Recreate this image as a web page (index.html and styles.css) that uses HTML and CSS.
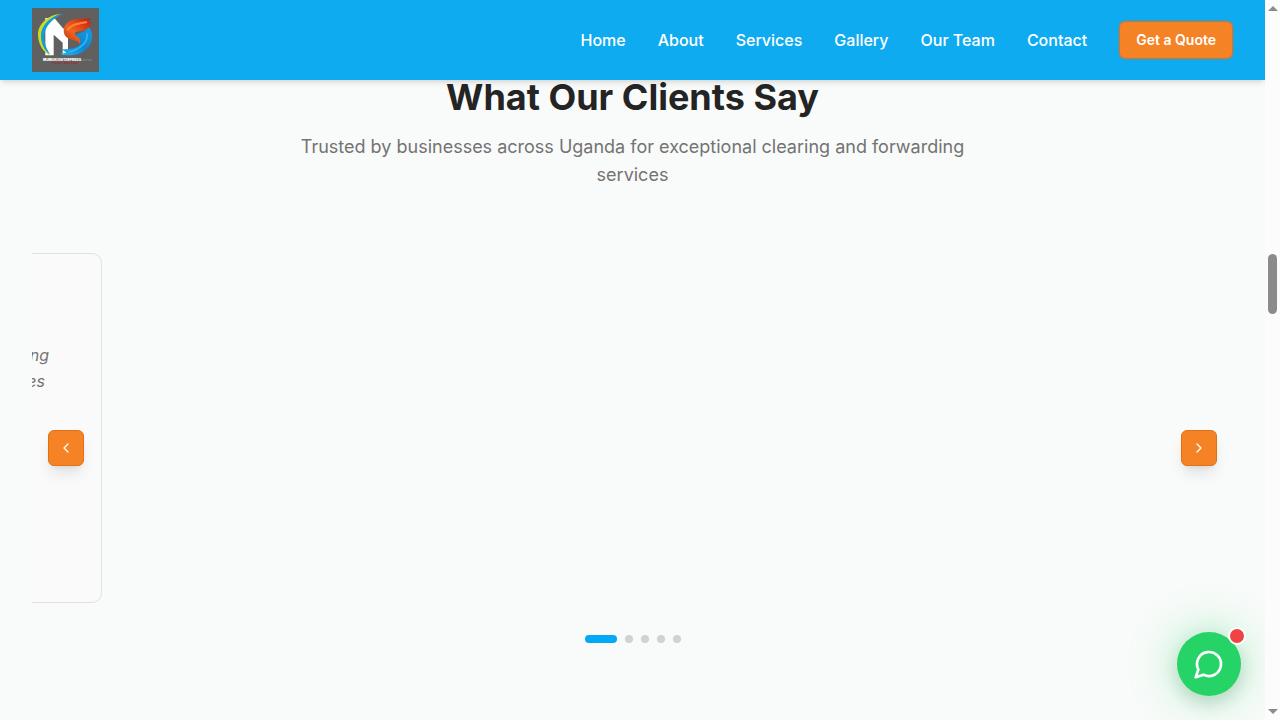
FILE: index.html
```html
<!DOCTYPE html>
<html lang="en">
<head>
<meta charset="utf-8">
<meta name="viewport" content="width=device-width, initial-scale=1">
<title>What Our Clients Say</title>
<link rel="stylesheet" href="styles.css">
</head>
<body>
<div class="page">
  <header class="header">
    <a class="logo" href="#" aria-label="Home page">
      <svg viewBox="0 0 201 192" width="67" height="64">
        <defs>
          <linearGradient id="fire" x1="0" y1="1" x2="1" y2="0"><stop offset="0" stop-color="#b83216"/><stop offset=".4" stop-color="#f0641c"/><stop offset="1" stop-color="#c9150f"/></linearGradient>
          <linearGradient id="water" x1="0" y1="1" x2="1" y2="0"><stop offset="0" stop-color="#28b4ee"/><stop offset=".5" stop-color="#0c86d2"/><stop offset="1" stop-color="#1b9ce0"/></linearGradient>
        </defs>
        <rect width="201" height="192" fill="#606060"/>
        <path d="M40 30H67L94 62L108 50V140H92V104L65 80V142H40Z" fill="#fff"/>
        <path d="M88 18C50 19 17 47 18 82C19 113 37 136 56 143C36 122 27 103 29 82C31 50 55 27 88 18Z" fill="#c8dc24"/>
        <path d="M96 17C58 22 27 50 27 84C27 108 39 130 54 139C43 121 36 105 37 85C38 54 62 29 96 17Z" fill="#159bd8"/>
        <path d="M178 32C156 34 126 28 106 44C92 56 92 78 104 88C118 99 135 94 143 107C150 98 148 90 137 84C128 80 126 76 133 71C151 70 170 62 180 50L170 52L178 42L166 42Z" fill="url(#fire)"/>
        <path d="M165 42C143 46 116 48 106 68" fill="none" stroke="#f9843a" stroke-width="6"/>
        <path d="M128 80C145 78 162 68 170 58C184 72 184 98 170 116C151 139 116 149 84 137L103 134L88 123C118 126 142 117 145 105C147 93 139 87 128 80Z" fill="url(#water)"/>
        <path d="M165 76C170 101 146 122 112 132" fill="none" stroke="#35b4ee" stroke-width="5"/>
        <text x="33" y="158" class="logo-name">MUMUKI ENTERPRISES</text>
        <text x="147" y="158" class="logo-suffix">LIMITED</text>
        <text x="61" y="167" class="logo-motto">Clearing made easier</text>
      </svg>
    </a>
    <nav class="nav">
      <a href="#">Home</a>
      <a href="#">About</a>
      <a href="#">Services</a>
      <a href="#">Gallery</a>
      <a href="#">Our Team</a>
      <a href="#">Contact</a>
      <button class="quote" type="button">Get a Quote</button>
    </nav>
  </header>
  <main class="testimonials">
    <h2 class="title">What Our Clients Say</h2>
    <p class="lead">Trusted by businesses across Uganda for exceptional clearing and forwarding services</p>
    <section class="carousel" aria-label="Testimonials">
      <div class="track">
        <article class="card">
          <blockquote class="words"><span class="line">clearing</span><span class="line short">services</span></blockquote>
        </article>
      </div>
      <div class="dots">
        <button class="dot active" type="button" aria-label="Testimonial 1"></button>
        <button class="dot" type="button" aria-label="Testimonial 2"></button>
        <button class="dot" type="button" aria-label="Testimonial 3"></button>
        <button class="dot" type="button" aria-label="Testimonial 4"></button>
        <button class="dot" type="button" aria-label="Testimonial 5"></button>
      </div>
      <button class="arrow prev" type="button" aria-label="Previous"><svg class="chevron" viewBox="0 0 24 24"><path d="m15 18-6-6 6-6"/></svg></button>
      <button class="arrow next" type="button" aria-label="Next"><svg class="chevron" viewBox="0 0 24 24"><path d="m9 18 6-6-6-6"/></svg></button>
    </section>
  </main>
  <button class="chat" type="button" aria-label="Chat with us">
    <svg class="bubble" viewBox="0 0 24 24"><path d="M7.900 20A9 9 0 1 0 4 16.100L2 22Z"/></svg>
    <span class="badge"></span>
  </button>
</div>
<div class="scrollbar" aria-hidden="true">
  <span class="cap up"></span>
  <span class="thumb"></span>
  <span class="cap down"></span>
</div>
</body>
</html>
```
FILE: styles.css
```css
* { box-sizing: border-box; }
body {
  margin: 0;
  display: flex;
  height: 100vh;
  overflow: hidden;
  background: #f9fbfa;
  color: #242424;
  font-family: Inter, "Liberation Sans", sans-serif;
}
button { padding: 0; border: 0; font: inherit; cursor: pointer; }
.page { position: relative; flex: 1; min-width: 0; overflow: hidden; }
.header {
  position: absolute;
  inset: 0 0 auto;
  z-index: 2;
  display: flex;
  align-items: center;
  justify-content: space-between;
  height: 80px;
  padding: 0 32px;
  background: #0fabf1;
  box-shadow: 0 4px 6px -1px rgba(0, 0, 0, .1), 0 2px 4px -2px rgba(0, 0, 0, .1);
}
.logo, .logo svg { display: block; }
.logo-name { font: 900 10px Inter, sans-serif; fill: #fff; }
.logo-suffix { font: 400 8px Inter, sans-serif; fill: #999; }
.logo-motto { font: italic 700 9px "Liberation Serif", serif; fill: #a32a2a; }
.nav { display: flex; align-items: center; gap: 32px; }
.nav a { color: #fff; font-size: 16px; font-weight: 500; line-height: 24px; text-decoration: none; }
.quote {
  padding: 8px 16px;
  border: 1px solid #e4700f;
  border-radius: 6px;
  background: #f58225;
  color: #fff;
  font-size: 14px;
  font-weight: 600;
  line-height: 20px;
}
.testimonials { padding: 77px 32px 0; }
.title { margin: 0 0 16px; font-size: 36px; font-weight: 700; line-height: 40px; text-align: center; }
.lead { max-width: 672px; margin: 0 auto 64px; color: #737373; font-size: 18px; line-height: 28px; text-align: center; }
.carousel { position: relative; }
.track { overflow: hidden; }
.card {
  width: 384px;
  height: 350px;
  margin-left: -314px;
  padding: 88px 52px 0 32px;
  border: 1px solid #dfe2e1;
  border-radius: 10px;
  background: #fafafa;
}
.words { margin: 0; color: #737373; font-size: 16px; font-style: italic; line-height: 26px; text-align: right; }
.line { display: block; }
.short { padding-right: 4px; }
.dots { display: flex; justify-content: center; gap: 8px; margin-top: 32px; }
.dot { width: 8px; height: 8px; border-radius: 4px; background: #d0d1d1; }
.dot.active { width: 32px; background: #03a9f4; }
.arrow {
  position: absolute;
  top: 50%;
  display: grid;
  place-items: center;
  width: 36px;
  height: 36px;
  margin-top: -18px;
  border: 1px solid #e4700f;
  border-radius: 6px;
  background: #f58225;
  box-shadow: 0 10px 15px -3px rgba(0, 0, 0, .1), 0 4px 6px -4px rgba(0, 0, 0, .1);
}
.prev { left: 16px; }
.next { right: 16px; }
.chevron, .bubble { fill: none; stroke: #fff; stroke-width: 2; stroke-linecap: round; stroke-linejoin: round; }
.chevron { width: 16px; height: 16px; }
.chat {
  position: absolute;
  right: 24px;
  bottom: 24px;
  display: grid;
  place-items: center;
  width: 64px;
  height: 64px;
  border-radius: 50%;
  background: #25d366;
  box-shadow: 0 0 60px rgba(37, 211, 102, .3), 0 0 30px rgba(37, 211, 102, .2), 0 8px 16px rgba(0, 0, 0, .12);
}
.bubble { width: 32px; height: 32px; }
.badge {
  position: absolute;
  top: -5px;
  right: -5px;
  width: 18px;
  height: 18px;
  border: 2px solid #fff;
  border-radius: 50%;
  background: #ef4444;
}
.scrollbar {
  display: grid;
  grid-template-rows: 17px 237fr 60px 389fr 17px;
  justify-items: center;
  width: 15px;
  background: #fcfcfc;
}
.cap { align-self: center; border: 5px solid transparent; }
.up { grid-row: 1; border-top: 0; border-bottom-color: #8b8b8b; }
.down { grid-row: 5; border-bottom: 0; border-top-color: #8b8b8b; }
.thumb { grid-row: 3; width: 9px; border-radius: 5px; background: #8b8b8b; }
```
